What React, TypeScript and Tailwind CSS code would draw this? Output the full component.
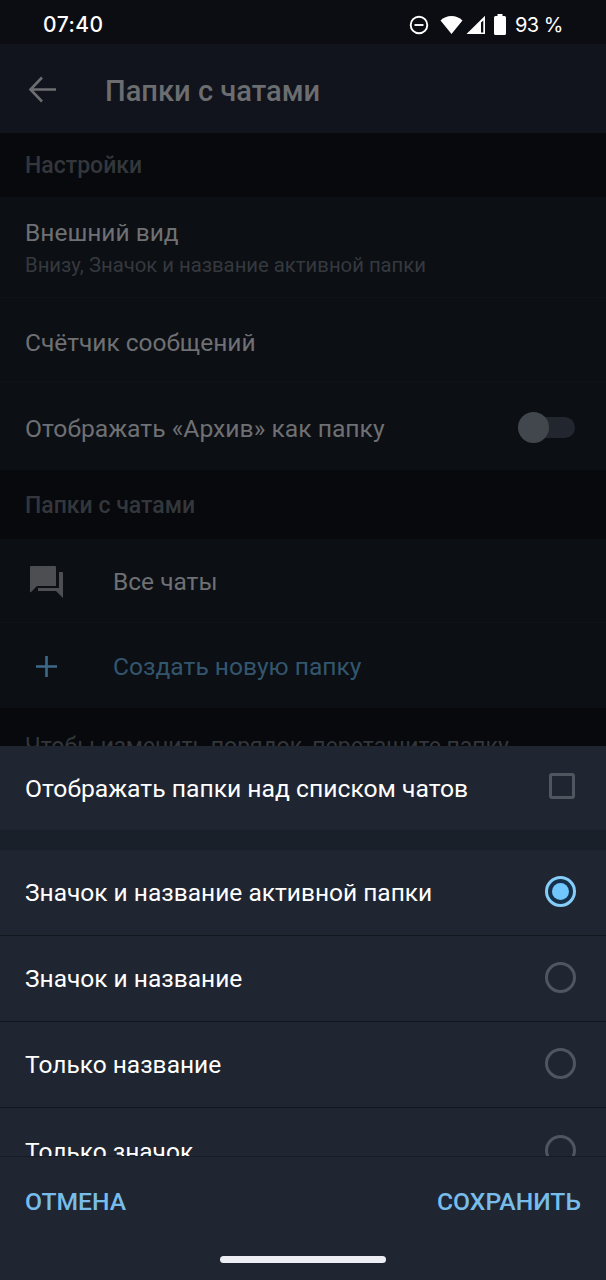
import React from "react";

const font = { fontFamily: "Roboto, 'Liberation Sans', sans-serif" };

function Radio({ on }: { on?: boolean }) {
  return on ? (
    <div className="w-[31px] h-[31px] mb-[4px] rounded-full border-[3px] border-[#86cdfa] bg-[#17304a] flex items-center justify-center">
      <div className="w-[17px] h-[17px] rounded-full bg-[#71c6fd]" />
    </div>
  ) : (
    <div className="w-[31px] h-[31px] mb-[4px] rounded-full border-[3px] border-[#4f5660]" />
  );
}

function SheetRow({ label, on, border = true }: { label: string; on?: boolean; border?: boolean }) {
  return (
    <div className={`h-[86px] shrink-0 pl-[25px] pr-[30px] pt-[2px] flex items-center justify-between ${border ? "border-b border-[#12161d]" : ""}`}>
      <span className="text-[24.500px] text-white">{label}</span>
      <Radio on={on} />
    </div>
  );
}

export default function App() {
  return (
    <div className="relative w-[606px] h-[1280px] overflow-hidden bg-[#07090d]" style={font}>
      <div className="h-[44px] bg-[#0b0d13] pl-[43px] pr-[43px] pt-[5px] flex items-center justify-between text-white">
        <span className="text-[21px] tracking-[0.5px] font-medium" style={{ fontFamily: "Inter, sans-serif" }}>07:40</span>
        <div className="flex items-center">
          <svg width="20" height="20" viewBox="0 0 20 20" className="mr-[11px]" fill="none" stroke="white" strokeWidth="1.9">
            <circle cx="10" cy="10" r="8.3" />
            <path d="M5.5 10h9" />
          </svg>
          <svg width="23" height="20" viewBox="0 0 23 20" fill="white" className="mr-[3px]">
            <path d="M0.5 5.5C3.5 2.7 7.2 1 11.5 1s8 1.7 11 4.5L11.5 19z" />
          </svg>
          <svg width="20" height="20" viewBox="0 0 20 20" fill="none" className="mr-[8px]">
            <path d="M0.5 19L19 0.8V19z" fill="white" />
            <path d="M15 7.500V17.500h2.300V5.500z" fill="#0b0d13" />
          </svg>
          <svg width="12" height="21" viewBox="0 0 12 21" fill="white" className="mr-[9px]">
            <path d="M3.500 0h5v2h2A1.500 1.500 0 0 1 12 3.500V19.500a1.500 1.500 0 0 1-1.500 1.500h-9A1.500 1.500 0 0 1 0 19.500V3.500A1.500 1.500 0 0 1 1.500 2h2z" />
          </svg>
          <span className="text-[20px] tracking-[-0.5px]" style={{ fontFamily: "Inter, sans-serif" }}>93 %</span>
        </div>
      </div>

      <div className="h-[89px] bg-[#11141c] flex items-center pl-[28px] pt-[6px]">
        <svg width="29" height="29" viewBox="0 0 29 29" fill="none" stroke="#6c6e72" strokeWidth="2.6" className="mb-[4px]">
          <path d="M28 14.500H3M14 2.500L2.500 14.500 14 26.500" />
        </svg>
        <span className="ml-[48px] text-[29.100px] font-medium text-[#6b6d70]">Папки с чатами</span>
      </div>

      <div className="h-[64px] pl-[25px] pt-[3px] flex items-center text-[23px] font-medium text-[#33373c]">Настройки</div>

      <div className="bg-[#0c0f14]">
        <div className="h-[101px] pl-[25px] pt-[20px] border-b border-[#0f1218]">
          <div className="text-[24.500px] leading-[32px] text-[#6f7073]">Внешний вид</div>
          <div className="text-[20.300px] leading-[24px] mt-[4px] text-[#35393e]">Внизу, Значок и название активной папки</div>
        </div>
        <div className="h-[84px] pl-[25px] pt-[8px] flex items-center text-[24.500px] text-[#6f7073] border-b border-[#0f1218]">Счётчик сообщений</div>
        <div className="h-[88px] pl-[25px] pr-[31px] pt-[6px] flex items-center justify-between text-[24.700px] text-[#6f7073]">
          <span>Отображать «Архив» как папку</span>
          <div className="relative w-[57px] h-[21px] mb-[3px] rounded-full bg-[#22262e]">
            <div className="absolute left-0 top-[-5px] w-[31px] h-[31px] rounded-full bg-[#42474d]" />
          </div>
        </div>
      </div>

      <div className="h-[69px] pl-[25px] pt-[4px] flex items-center text-[23px] font-medium text-[#33373c]">Папки с чатами</div>

      <div className="bg-[#0c0f14]">
        <div className="h-[84px] flex items-center pl-[30px] pt-[4px] border-b border-[#0f1218]">
          <svg width="34" height="32" viewBox="0 0 34 32" fill="#4c4e51" className="mb-[2px]">
            <path d="M1 0h24a1 1 0 0 1 1 1v19H7l-6 6a0.500 0.500 0 0 1-1-0.500V1a1 1 0 0 1 1-1z" />
            <path d="M29 6h3a1 1 0 0 1 1 1v25l-7-7H8v-3h21z" />
          </svg>
          <span className="ml-[49px] text-[24.500px] text-[#6f7073]">Все чаты</span>
        </div>
        <div className="h-[85px] flex items-center pl-[35px] pt-[4px]">
          <svg width="23" height="23" viewBox="0 0 23 23" stroke="#3e6a8a" strokeWidth="2.600" fill="none" className="mb-[2px]">
            <path d="M11.500 1v21M1 11.500h21" />
          </svg>
          <span className="ml-[55px] text-[24.600px] text-[#33566e]">Создать новую папку</span>
        </div>
      </div>

      <div className="pl-[25px] pt-[22px] text-[23px] text-[#33373c]">Чтобы изменить порядок, перетащите папку</div>

      <div className="absolute left-0 right-0 top-[746px] bottom-0 bg-[#1f2631] flex flex-col">
        <div className="h-[84px] shrink-0 pl-[25px] pr-[31px] pt-[2px] flex items-center justify-between">
          <span className="text-[24.700px] text-white">Отображать папки над списком чатов</span>
          <div className="w-[26px] h-[26px] mb-[6px] rounded-[3px] border-[3px] border-[#4f5660]" />
        </div>
        <div className="h-[20px] shrink-0 bg-[#1a2029]" />
        <div className="h-[307px] shrink-0 overflow-hidden border-b border-[#181d25]">
          <SheetRow label="Значок и название активной папки" on />
          <SheetRow label="Значок и название" />
          <SheetRow label="Только название" />
          <SheetRow label="Только значок" border={false} />
        </div>
        <div className="h-[89px] shrink-0 pl-[25px] pr-[25px] flex items-center justify-between text-[24.700px] font-medium text-[#78bdea]">
          <span>ОТМЕНА</span>
          <span>СОХРАНИТЬ</span>
        </div>
        <div className="flex justify-center">
          <div className="w-[166px] h-[7px] rounded-full bg-[#eceef3] mt-[10px]" />
        </div>
      </div>
    </div>
  );
}
